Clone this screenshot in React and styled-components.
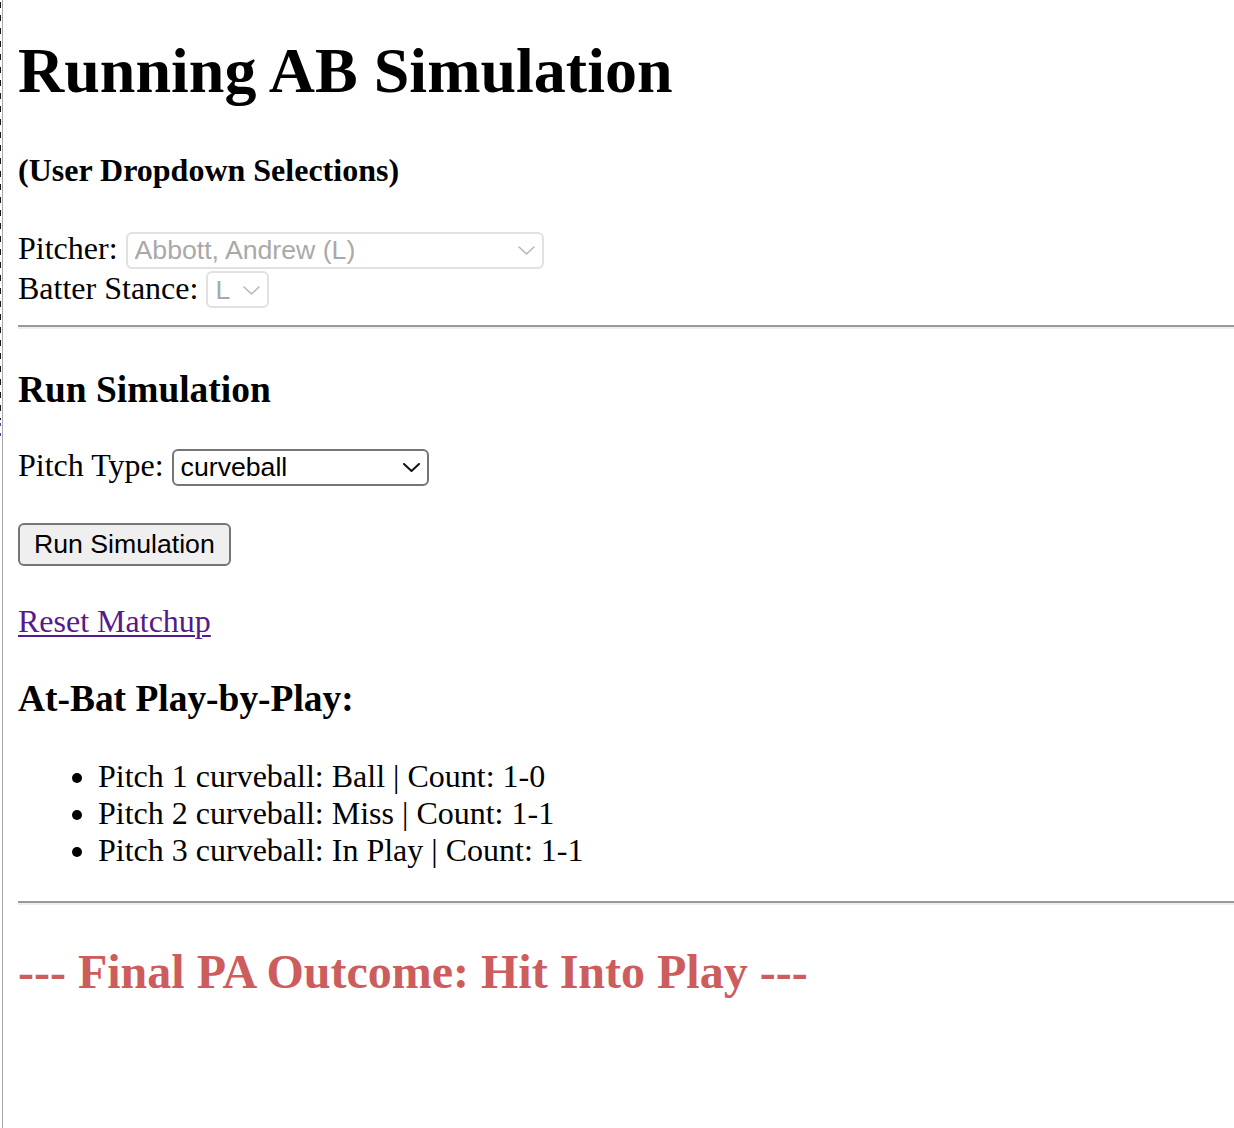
import React from "react";
import styled, { createGlobalStyle } from "styled-components";

const GlobalStyle = createGlobalStyle`
  html, body {
    margin: 0;
    padding: 0;
    background: #ffffff;
  }
  body {
    font-family: "Liberation Serif", "Times New Roman", Times, serif;
    font-size: 32px;
    color: #000000;
  }
`;

const Page = styled.div`
  display: flex;
  align-items: stretch;
  min-height: 100vh;
`;

const EdgeStrip = styled.div`
  flex: none;
  width: 2px;
  border-right: 1px solid #a9a9a9;
  background-image:
    repeating-linear-gradient(to bottom, #1a1a1a 0 6px, transparent 6px 13px),
    linear-gradient(to bottom, #4a3fd0 0 3px, transparent 3px 10px, #4a3fd0 10px 13px);
  background-size: 1px 418px, 1px 13px;
  background-position: 0 2px, 0 423px;
  background-repeat: no-repeat;
`;

const Main = styled.main`
  flex: 1;
  min-width: 0;
  padding: 0 0 40px 15px;
`;

const Title = styled.h1`
  margin: 34px 0 0;
  font-size: 64px;
  line-height: 74px;
  font-weight: bold;
`;

const Subtitle = styled.h4`
  margin: 44px 0 0;
  font-size: 32px;
  line-height: 37px;
  font-weight: bold;
`;

const SectionTitle = styled.h3`
  margin: ${(p) => p.$top}px 0 0;
  font-size: 37.44px;
  line-height: 43px;
  font-weight: bold;
`;

const FieldRow = styled.div`
  display: flex;
  align-items: baseline;
  gap: 8px;
  margin-top: ${(p) => p.$top || 0}px;
  line-height: 38px;
`;

const Label = styled.label`
  font-size: 32px;
  line-height: 38px;
`;

const SelectWrap = styled.span`
  position: relative;
  display: inline-flex;
`;

const Select = styled.select`
  appearance: none;
  -webkit-appearance: none;
  box-sizing: border-box;
  width: ${(p) => p.$width}px;
  height: 37px;
  margin: 0;
  padding: 0 30px 0 7px;
  font-family: "Liberation Sans", Arial, Helvetica, sans-serif;
  font-size: 26.67px;
  color: #000000;
  background: #ffffff;
  border: 2px solid #767676;
  border-radius: 6px;
  opacity: 1;

  &:disabled {
    color: #a9a9a9;
    border-color: #e1e1e1;
    background: #ffffff;
  }
`;

const Chevron = styled.svg`
  position: absolute;
  right: ${(p) => p.$right}px;
  top: 50%;
  margin-top: -4px;
  width: 17px;
  height: 9px;
  pointer-events: none;
`;

const RunButton = styled.button`
  display: block;
  box-sizing: border-box;
  height: 43px;
  margin: 37px 0 0;
  padding: 0 14px;
  font-family: "Liberation Sans", Arial, Helvetica, sans-serif;
  font-size: 26.67px;
  color: #000000;
  background: #efefef;
  border: 2px solid #767676;
  border-radius: 6px;
  cursor: pointer;
`;

const LinkLine = styled.div`
  margin-top: 37px;
  line-height: 37px;
`;

const ResetLink = styled.a`
  color: #551a8b;
  text-decoration: underline;
  text-underline-offset: 3px;
  text-decoration-thickness: 2px;
`;

const Rule = styled.hr`
  height: 0;
  margin: ${(p) => p.$top}px 0 0;
  border: 0;
  border-top: 2px solid #9a9a9a;
  border-bottom: 2px solid #eeeeee;
`;

const PlayList = styled.ul`
  margin: 38px 0 0;
  padding-left: 80px;
  list-style: disc;
`;

const PlayItem = styled.li`
  line-height: 37.3px;
`;

const Outcome = styled.h2`
  margin: 39px 0 0;
  font-size: 48px;
  line-height: 55px;
  font-weight: bold;
  color: #cd5c5c;
`;

function DropDown({ width, value, options, disabled, right = 8 }) {
  const stroke = disabled ? "#b5b5b5" : "#111111";
  return (
    <SelectWrap>
      <Select $width={width} value={value} disabled={disabled} onChange={() => {}}>
        {options.map((o) => (
          <option key={o} value={o}>
            {o}
          </option>
        ))}
      </Select>
      <Chevron $right={right} viewBox="0 0 17 9" aria-hidden="true">
        <polyline
          points="1,1 8.5,8 16,1"
          fill="none"
          stroke={stroke}
          strokeWidth={disabled ? 1.5 : 2}
          strokeLinecap="round"
          strokeLinejoin="round"
        />
      </Chevron>
    </SelectWrap>
  );
}

const plays = [
  "Pitch 1 curveball: Ball | Count: 1-0",
  "Pitch 2 curveball: Miss | Count: 1-1",
  "Pitch 3 curveball: In Play | Count: 1-1",
];

export default function App() {
  return (
    <>
      <GlobalStyle />
      <Page>
        <EdgeStrip />
        <Main>
          <Title>Running AB Simulation</Title>
          <Subtitle>(User Dropdown Selections)</Subtitle>

          <FieldRow $top={40}>
            <Label>Pitcher:</Label>
            <DropDown
              width={418}
              value="Abbott, Andrew (L)"
              options={["Abbott, Andrew (L)"]}
              disabled
              right={9}
            />
          </FieldRow>
          <FieldRow>
            <Label>Batter Stance:</Label>
            <DropDown width={63} value="L" options={["L", "R"]} disabled right={9} />
          </FieldRow>

          <Rule $top={17} />

          <SectionTitle $top={39}>Run Simulation</SectionTitle>

          <FieldRow $top={35}>
            <Label>Pitch Type:</Label>
            <DropDown
              width={257}
              value="curveball"
              options={["fastball", "curveball", "slider", "changeup"]}
              right={9}
            />
          </FieldRow>

          <RunButton type="button">Run Simulation</RunButton>

          <LinkLine>
            <ResetLink href="#reset">Reset Matchup</ResetLink>
          </LinkLine>

          <SectionTitle $top={37}>At-Bat Play-by-Play:</SectionTitle>

          <PlayList>
            {plays.map((p) => (
              <PlayItem key={p}>{p}</PlayItem>
            ))}
          </PlayList>

          <Rule $top={32} />

          <Outcome>--- Final PA Outcome: Hit Into Play ---</Outcome>
        </Main>
      </Page>
    </>
  );
}
